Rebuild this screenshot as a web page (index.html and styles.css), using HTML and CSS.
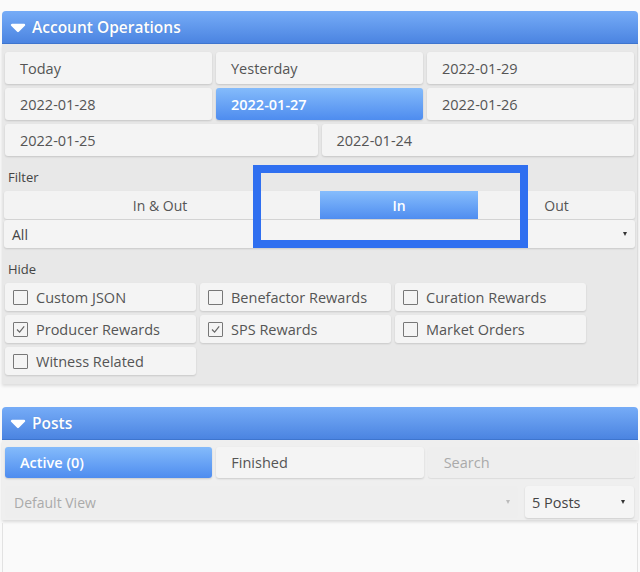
FILE: index.html
```html
<!DOCTYPE html>
<html>
<head>
<meta charset="utf-8">
<link rel="stylesheet" href="styles.css">
</head>
<body>
<div class="page">
  <section class="panel ops">
    <div class="panel-head">
      <svg class="tri" width="16" height="10" viewBox="0 0 16 10"><path d="M2 2 L14 2 L8 8 Z" fill="#fff" stroke="#fff" stroke-width="2.4" stroke-linejoin="round"/></svg>
      <span>Account Operations</span>
    </div>
    <div class="panel-body">
      <div class="dates">
        <div class="btn">Today</div>
        <div class="btn">Yesterday</div>
        <div class="btn">2022-01-29</div>
        <div class="btn">2022-01-28</div>
        <div class="btn active">2022-01-27</div>
        <div class="btn">2022-01-26</div>
      </div>
      <div class="dates two">
        <div class="btn">2022-01-25</div>
        <div class="btn">2022-01-24</div>
      </div>
      <div class="label first">Filter</div>
      <div class="toggle-wrap">
        <div class="toggle">
          <div class="seg seg-wide">In &amp; Out</div>
          <div class="seg seg-on">In</div>
          <div class="seg">Out</div>
        </div>
        <div class="select">
          <span>All</span>
          <span class="caret"></span>
        </div>
        <div class="mark"></div>
      </div>
      <div class="label">Hide</div>
      <div class="checks">
        <label class="check"><span class="box"></span>Custom JSON</label>
        <label class="check"><span class="box"></span>Benefactor Rewards</label>
        <label class="check"><span class="box"></span>Curation Rewards</label>
        <label class="check"><span class="box on"><svg width="13" height="13" viewBox="0 0 13 13"><path d="M3 6.5 L5.6 9.2 L10.2 3.4" fill="none" stroke="#666" stroke-width="1.2"/></svg></span>Producer Rewards</label>
        <label class="check"><span class="box on"><svg width="13" height="13" viewBox="0 0 13 13"><path d="M3 6.5 L5.6 9.2 L10.2 3.4" fill="none" stroke="#666" stroke-width="1.2"/></svg></span>SPS Rewards</label>
        <label class="check"><span class="box"></span>Market Orders</label>
        <label class="check"><span class="box"></span>Witness Related</label>
      </div>
    </div>
  </section>

  <section class="panel posts">
    <div class="panel-head">
      <svg class="tri" width="16" height="10" viewBox="0 0 16 10"><path d="M2 2 L14 2 L8 8 Z" fill="#fff" stroke="#fff" stroke-width="2.4" stroke-linejoin="round"/></svg>
      <span>Posts</span>
    </div>
    <div class="posts-body">
      <div class="dates">
        <div class="btn active">Active (0)</div>
        <div class="btn">Finished</div>
        <div class="search">Search</div>
      </div>
      <div class="view-row">
        <div class="select disabled">
          <span>Default View</span>
          <span class="caret light"></span>
        </div>
        <div class="select count">
          <span>5 Posts</span>
          <span class="caret"></span>
        </div>
      </div>
    </div>
    <div class="rest"></div>
  </section>
</div>
</body>
</html>
```
FILE: styles.css
```css
* { box-sizing: border-box; }
html, body { margin: 0; padding: 0; }
body {
  background: #fafafa;
  font-family: "Open Sans", "Noto Sans", sans-serif;
  color: #555;
  width: 640px;
  height: 572px;
  overflow: hidden;
}
.page {
  display: flex;
  flex-direction: column;
  height: 572px;
  padding-top: 11px;
}
.panel { margin: 0 2px; }
.panel-head {
  height: 33px;
  display: flex;
  align-items: center;
  gap: 6px;
  padding-left: 8px;
  background: linear-gradient(#76acf7, #4b84e1);
  border-radius: 4px 4px 0 0;
  color: #fff;
  font-size: 15.5px;
  font-weight: 600;
  text-shadow: 0 0 1px rgba(0,0,0,0.15);
  border-bottom: 1px solid #3f76cf;
}
.tri { margin-top: 1px; }
.panel-body {
  background: #e8e8e8;
  padding: 8px 3px 9px;
  border-right: 1px solid #dcdcdc;
  box-shadow: 0 2px 3px rgba(0,0,0,0.12);
}
.dates {
  display: grid;
  grid-template-columns: 1fr 1fr 1fr;
  gap: 4px;
}
.dates + .dates { margin-top: 4px; }
.dates.two { grid-template-columns: 1fr 1fr; }
.btn {
  height: 32px;
  display: flex;
  align-items: center;
  padding-left: 15px;
  background: #f4f4f4;
  border-radius: 3px;
  box-shadow: 0 1px 2px rgba(0,0,0,0.15);
  font-size: 14.5px;
  color: #555;
}
.btn.active {
  background: linear-gradient(#84bbfb, #4e8cef);
  color: #fff;
  font-weight: 600;
}
.label {
  font-size: 13px;
  color: #444;
  height: 18px;
  line-height: 18px;
  margin-top: 12px;
  padding-left: 3px;
}
.label.first { margin-top: 12px; }
.toggle-wrap {
  position: relative;
  margin: 5px -1px 0;
}
.toggle {
  display: flex;
  height: 28px;
  background: #f3f3f3;
  border-radius: 3px;
  box-shadow: 0 1px 2px rgba(0,0,0,0.12);
  font-size: 14px;
  color: #555;
}
.seg {
  flex: 1;
  display: flex;
  align-items: center;
  justify-content: center;
}
.seg-wide { flex: 0 0 312px; margin-right: 4px; }
.seg-on {
  flex: 0 0 158px;
  background: linear-gradient(#86bdfc, #4f8df0);
  color: #fff;
  font-weight: 600;
}
.select {
  height: 28px;
  margin-top: 1px;
  display: flex;
  align-items: center;
  justify-content: space-between;
  padding: 0 8px 0 8px;
  background: #f4f4f4;
  border-radius: 3px;
  box-shadow: 0 1px 2px rgba(0,0,0,0.14);
  font-size: 14px;
  color: #444;
}
.caret {
  width: 0;
  height: 0;
  border-left: 2.5px solid transparent;
  border-right: 2.5px solid transparent;
  border-top: 4px solid #333;
}
.caret.light { border-top-color: #bbb; }
.mark {
  position: absolute;
  left: 249px;
  top: -26px;
  width: 275px;
  height: 83px;
  border: 8px solid #2f6ff0;
}
.checks {
  margin-top: 5px;
  display: grid;
  grid-template-columns: 191px 191px 191px;
  gap: 4px;
}
.check {
  height: 28px;
  display: flex;
  align-items: center;
  gap: 8px;
  padding-left: 8px;
  background: #f4f4f4;
  border-radius: 3px;
  box-shadow: 0 1px 2px rgba(0,0,0,0.14);
  font-size: 14.5px;
  color: #555;
}
.box {
  width: 15px;
  height: 15px;
  border: 1.5px solid #777;
  border-radius: 1px;
  display: flex;
  align-items: center;
  justify-content: center;
}
.posts { margin-top: 23px; flex: 1; display: flex; flex-direction: column; }
.posts-body {
  background: #efefef;
  padding: 7px 3px 2px;
  box-shadow: 0 2px 3px rgba(0,0,0,0.13);
}
.posts-body .btn { height: 31px; }
.search {
  height: 31px;
  display: flex;
  align-items: center;
  padding-left: 16px;
  background: #eeeeee;
  border-radius: 3px;
  box-shadow: 0 1px 1px rgba(0,0,0,0.08);
  font-size: 14.5px;
  color: #aaa;
}
.view-row {
  display: flex;
  gap: 7px;
  margin-top: 8px;
}
.view-row .select { height: 32px; margin-top: 0; }
.select.disabled {
  flex: 0 0 513px;
  background: #eeeeee;
  color: #aaa;
  box-shadow: none;
  padding-left: 9px;
}
.select.count {
  flex: 0 0 109px;
  background: #f5f5f5;
  color: #444;
  padding-left: 7px;
  padding-right: 9px;
  font-size: 14.5px;
}
.rest {
  flex: 1;
  border-left: 1px solid #e2e2e2;
  border-right: 1px solid #e2e2e2;
  margin-top: 3px;
}
```
